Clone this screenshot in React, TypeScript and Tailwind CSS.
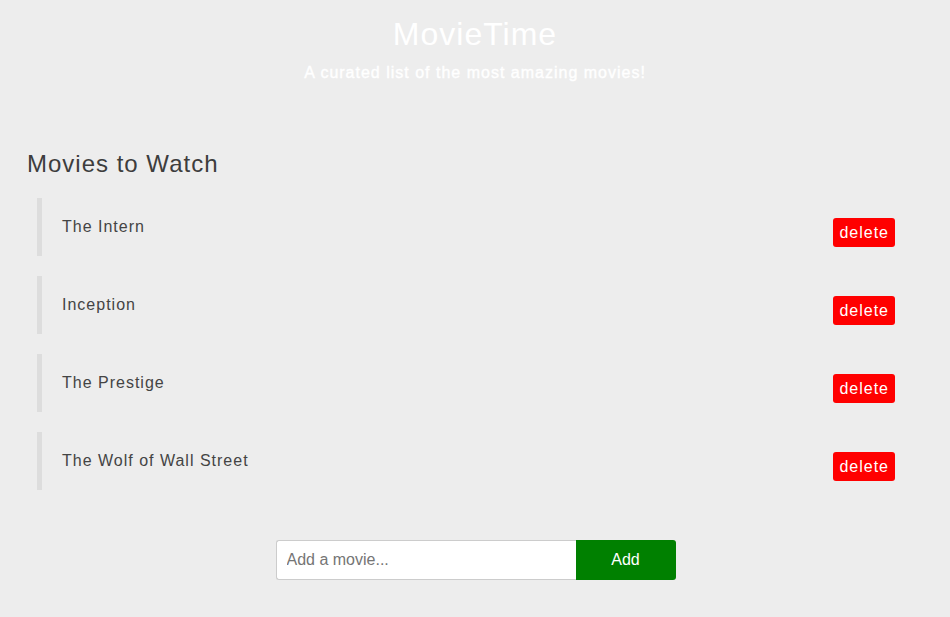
import React, { useState } from "react";

export default function App() {
  const [movies, setMovies] = useState<string[]>([
    "The Intern",
    "Inception",
    "The Prestige",
    "The Wolf of Wall Street",
  ]);
  const [value, setValue] = useState("");

  return (
    <div
      className="min-h-[617px] w-full bg-[#ededed] tracking-[1px] text-[#444]"
      style={{ fontFamily: '"Liberation Sans", Arial, sans-serif' }}
    >
      <header className="flex flex-col items-center pt-[16px] text-white">
        <h1 className="text-[32px] leading-[37px] font-normal">MovieTime</h1>
        <p className="mt-[11px] text-[16px] leading-[18px] [-webkit-text-stroke:0.4px_#ffffff]">
          A curated list of the most amazing movies!
        </p>
      </header>

      <section className="mt-[68px] pl-[27px]">
        <h2 className="text-[24px] leading-[28px] text-[#3d3d3d] font-normal">
          Movies to Watch
        </h2>
      </section>

      <ul className="mt-[20px] ml-[37px] mr-[37px] flex flex-col gap-[20px]">
        {movies.map((m, i) => (
          <li
            key={m + i}
            className="flex h-[58px] items-start justify-between border-l-[5px] border-[#dddddd] py-[20px] pl-[20px] pr-[18px]"
          >
            <span className="text-[16px] leading-[18px]">{m}</span>
            <button
              onClick={() => setMovies(movies.filter((_, j) => j !== i))}
              className="h-[29px] rounded-[3px] bg-[#ff0000] px-[6px] text-[16px] leading-[18px] text-white"
            >
              delete
            </button>
          </li>
        ))}
      </ul>

      <div className="mt-[50px] flex justify-center pb-[37px]">
        <div className="ml-[1px] flex h-[40px] w-[400px]">
          <input
            value={value}
            onChange={(e) => setValue(e.target.value)}
            placeholder="Add a movie..."
            className="h-full w-[300px] rounded-l-[3px] border border-r-0 border-[#cccccc] bg-white px-[10px] text-[16px] tracking-normal text-[#444] placeholder:text-[#757575] outline-none"
          />
          <button
            onClick={() => {
              if (value.trim()) {
                setMovies([...movies, value.trim()]);
                setValue("");
              }
            }}
            className="h-full w-[100px] rounded-r-[3px] bg-[#008000] text-[16px] tracking-normal text-white"
          >
            Add
          </button>
        </div>
      </div>
    </div>
  );
}
